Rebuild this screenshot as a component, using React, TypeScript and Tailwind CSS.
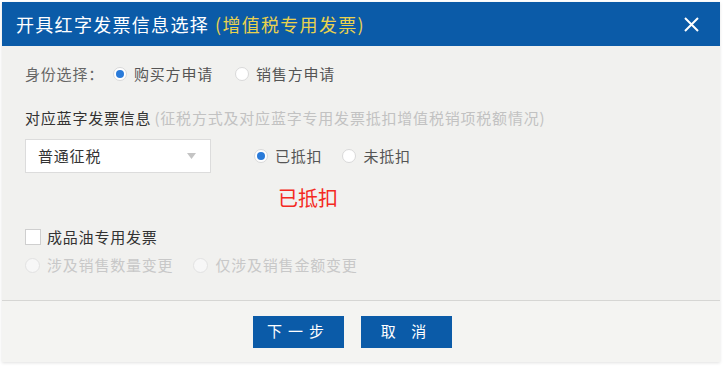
const font = { fontFamily: '"Noto Sans CJK SC", "Noto Sans", sans-serif' };

type RadioProps = { checked?: boolean; disabled?: boolean; label: string };

const Radio = ({ checked, disabled, label }: RadioProps) => (
    <label className="flex items-center gap-[7px]">
        <span
            className={
                disabled
                    ? "flex h-[15px] w-[15px] items-center justify-center rounded-full border border-[#e2e2e2] bg-[#f7f7f7]"
                    : "flex h-[14px] w-[14px] items-center justify-center rounded-full border border-[#d9d9d9] bg-white"
            }
        >
            {checked && <span className="h-[8px] w-[8px] rounded-full bg-[#2a7bd9]" />}
        </span>
        <span className={disabled ? "text-[#c8c8c8]" : "text-[#555]"}>{label}</span>
    </label>
);

export default function App() {
    return (
        <div className="h-[366px] w-[724px] bg-white px-[2px] pt-[2px]" style={font}>
            <div className="flex h-[360px] w-[718px] flex-col bg-[#f1f1ef] shadow-[0_1px_3px_rgba(0,0,0,0.12)]">
                {/* header */}
                <div className="flex h-[44px] items-center justify-between bg-[#0b5ba8] pl-[14px] pr-[20px]">
                    <div className="text-[18px] leading-none tracking-[1.3px]">
                        <span className="text-white">开具红字发票信息选择</span>
                        <span className="ml-[6px] text-[#e9d24e]">(增值税专用发票)</span>
                    </div>
                    <svg width="17" height="17" viewBox="0 0 17 17" className="text-white">
                        <path d="M2 2 L15 15 M15 2 L2 15" stroke="currentColor" strokeWidth="2" />
                    </svg>
                </div>

                {/* body */}
                <div className="flex flex-1 flex-col px-[23px] pt-[18px] text-[15px] leading-[20px] tracking-[0.8px]">
                    <div className="flex h-[20px] items-center">
                        <span className="text-[#666]">身份选择：</span>
                        <div className="ml-[9px] flex items-center gap-[22px]">
                            <Radio checked label="购买方申请" />
                            <Radio label="销售方申请" />
                        </div>
                    </div>

                    <div className="mt-[24px] flex h-[20px] items-center">
                        <span className="text-[#333]">对应蓝字发票信息</span>
                        <span className="ml-[3px] text-[#c2c2c2]">(征税方式及对应蓝字专用发票抵扣增值税销项税额情况)</span>
                    </div>

                    <div className="mt-[11px] flex items-center">
                        <div className="flex h-[34px] w-[186px] items-center justify-between border border-[#dcdcdc] bg-white pl-[12px] pr-[14px]">
                            <span className="text-[#333]">普通征税</span>
                            <svg width="9" height="6" viewBox="0 0 9 6">
                                <path d="M0 0 H9 L4.5 6 Z" fill="#c4c4c4" />
                            </svg>
                        </div>
                        <div className="ml-[43px] flex items-center gap-[20px]">
                            <Radio checked label="已抵扣" />
                            <Radio label="未抵扣" />
                        </div>
                    </div>

                    <div className="ml-[253px] mt-[13px] text-[20px] leading-[24px] tracking-normal text-[#f42a22]">已抵扣</div>

                    <div className="mt-[17px] flex h-[20px] items-center gap-[6px]">
                        <span className="h-[16px] w-[16px] border border-[#cfcfcf] bg-white" />
                        <span className="text-[#333]">成品油专用发票</span>
                    </div>

                    <div className="mt-[8px] flex h-[20px] items-center gap-[20px]">
                        <Radio disabled label="涉及销售数量变更" />
                        <Radio disabled label="仅涉及销售金额变更" />
                    </div>
                </div>

                {/* footer */}
                <div className="flex h-[62px] items-center justify-center gap-[17px] border-t border-[#d6d6d4] bg-[#f4f4f2] pr-[17px]">
                    <button className="h-[32px] w-[91px] bg-[#0b5ba8] text-[15px] tracking-[6px] text-white">下一步</button>
                    <button className="h-[32px] w-[91px] bg-[#0b5ba8] text-[15px] tracking-[6px] text-white">取 消</button>
                </div>
            </div>
        </div>
    );
}
